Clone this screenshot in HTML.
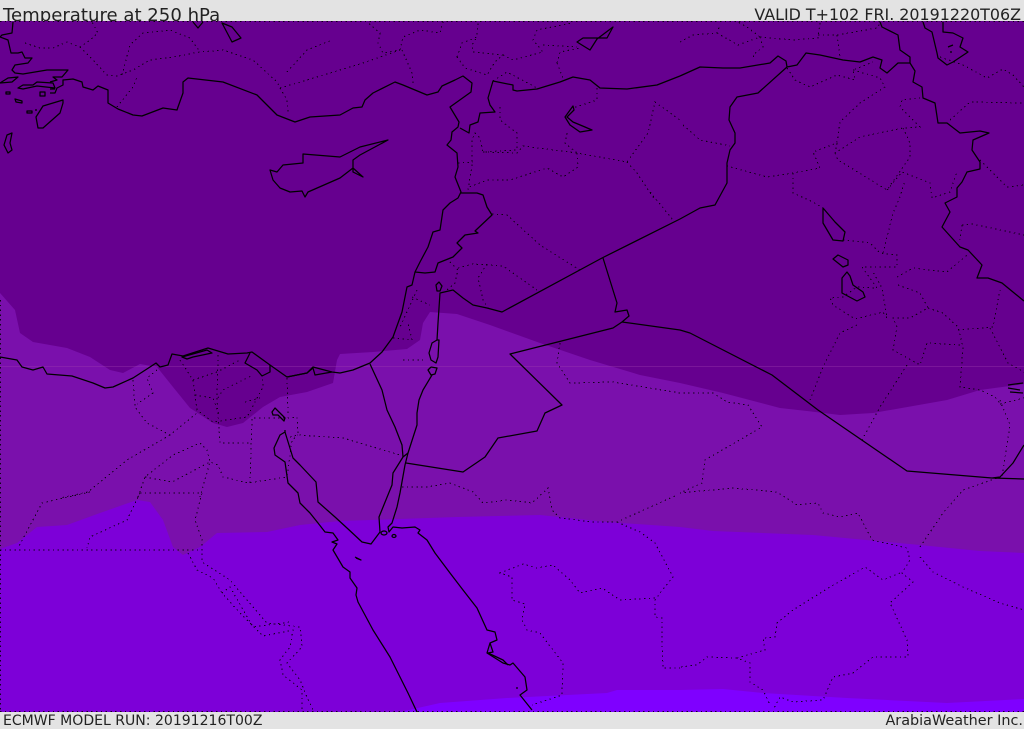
<!DOCTYPE html>
<html><head><meta charset="utf-8"><title>Temperature at 250 hPa</title>
<style>
html,body{margin:0;padding:0;background:#e3e3e3;width:1024px;height:729px;overflow:hidden}
.t{position:absolute;font-family:"DejaVu Sans","Liberation Sans",sans-serif;color:#222;white-space:nowrap;line-height:1}
svg{position:absolute;left:0;top:21px}
.c{fill:none;stroke:#000;stroke-width:1.25;stroke-linejoin:round;stroke-linecap:butt}
.d{fill:none;stroke:#000;stroke-width:1;stroke-dasharray:1.4 3.4;opacity:.85;shape-rendering:crispEdges}
</style></head><body>
<div class="t" style="left:3px;top:7px;font-size:18.1px">Temperature at 250 hPa</div>
<div class="t" style="right:3px;top:7px;font-size:15.9px">VALID T+102 FRI. 20191220T06Z</div>
<div class="t" style="left:3px;top:714px;font-size:14.04px">ECMWF MODEL RUN: 20191216T00Z</div>
<div class="t" style="right:1px;top:714px;font-size:14.4px">ArabiaWeather Inc.</div>
<svg width="1024" height="691" viewBox="0 21 1024 691">
<rect x="0" y="21" width="1024" height="691" fill="#7f00ff"/>
<polygon fill="#7d00d8" points="0,21 1024,21 1024,699 947,703 847,698 763,693 723,689 680,690 617,690 607,693 507,698 440,703 400,712 0,712"/>
<polygon fill="#7a10ac" points="0,21 1024,21 1024,553 980,551 920,545 813,535 713,531 680,527 607,522 540,515 457,517 340,521 300,525 267,532 217,533 200,547 183,555 173,547 163,520 150,502 137,500 100,513 67,525 37,527 17,543 0,549"/>
<polygon fill="#66008f" points="0,21 1024,21 1024,384 980,390 947,400 873,413 840,415 807,411 780,408 723,393 680,383 640,375 590,360 540,343 490,325 457,314 430,312 423,323 420,340 407,349 373,352 340,354 337,360 333,383 307,392 280,397 263,407 243,423 227,427 213,423 190,408 173,387 157,367 140,364 123,373 110,370 90,357 67,348 33,342 20,333 15,310 0,293"/>
<line x1="0" y1="366.5" x2="1024" y2="366.5" stroke="#a040b0" stroke-opacity=".35"/>
<!-- frame dots -->
<path class="d" d="M0,21.5H1024M0,711.5H1024M.5,300V712"/>
<!-- dotted borders -->
<path class="d" d="M25,43L40,48 53,48 67,42 80,47 90,40 98,33 92,22M80,47L93,60 107,75 117,76 133,70 150,60 173,57 200,52 223,50 253,60 277,82 280,88 287,100 288,113M122,75L130,45 143,33 170,30 190,38 200,52M117,107L133,87 137,77M280,88L307,80 340,70 363,63 400,50 383,53 378,43 380,33 367,22M400,50L403,37 420,30 440,33 443,22M402,50L412,73 413,83M287,72L307,50 332,40M457,57L462,43 477,37 478,22M457,57L465,68 487,75 495,62 503,55 473,52 472,45 477,37M503,55L513,60 543,52 533,40 537,30 572,23M543,45L577,47M557,63L563,78M557,63L560,52 580,48M493,81L507,72 537,88M597,88V100L573,108M500,107V120L517,133V150L483,152 480,138 475,133 472,140V167L470,177 468,190M483,152L517,153 523,146 577,153 627,162 648,133 655,102 680,120M627,162L637,173 655,200M577,153L578,167 563,177 547,168 510,180 487,180 467,188M458,163L473,162M567,133L565,143 577,153"/>
<path class="d" d="M680,42L693,35 717,33 720,25M717,33L738,45 760,37 747,27 738,22M760,37L793,40 818,38 820,23M818,35L837,35 877,28 881,22M760,37L763,47 753,55 755,60M837,35L840,57M787,68L795,80 810,87 837,75 855,80 853,70 873,62M853,70L880,78 885,87 860,103 840,122 837,143 813,152 820,168 793,173 767,177 727,166M683,125L700,140 730,146M837,143L835,153 860,137 903,128 920,127 900,107 902,100 920,98M903,128L910,143V157L887,190 838,160 835,153M887,190L902,172 930,183 932,198 950,192 957,172M950,120L970,102 1024,103M980,160L1007,187 1024,185M940,57L963,65 987,78 1003,69 1013,75 1024,87M793,173V193L813,202 823,208"/>
<path class="d" d="M843,240L870,243 880,253 897,255V267H862L877,288 857,287 843,297 830,298 833,305 855,319 883,312 887,318 882,288 872,270M883,253L893,213 900,197 905,180M897,277L913,268 947,272 967,255M898,285L920,293 928,308 910,318H893L897,327 893,350 920,365 927,343 962,345M928,308L943,313 958,327 963,347 960,387 980,390 995,397 1003,407M958,330L993,327 1000,290M990,328L1008,363 1024,372M907,365L880,407 862,440M857,325L840,333 823,367 810,400M962,225L972,224 1024,235M962,225L960,240M1000,400L1010,425 1002,477M1000,404L1024,398"/>
<path class="d" d="M560,343L557,363 570,383 613,382 680,393 713,393 727,402 748,405 762,427 705,460 702,483 680,493 733,488 777,492 797,505 818,503 823,513 840,517 858,513 872,540 907,548 910,560 902,573 913,582 890,603 907,640 908,657H873L853,673 833,677 823,700 793,702 780,697 773,710M920,547L943,513 963,490 1000,477M920,557L933,572 963,587 1000,603 1024,610M900,573L883,580 865,567 830,587 793,610 777,623 775,637 763,638 765,650 737,658 750,663V682L763,690 770,705M737,658L707,657 697,665 680,667"/>
<path class="d" d="M290,437L298,435 343,438 400,455M402,487H427L450,483 473,492 483,503 507,500 532,503 548,488 552,510 560,518 593,522H617L677,495M617,522L640,532 655,543 673,577 660,593 655,600V617L662,618V640L663,668H680M655,598L620,600 602,588 580,593 570,580 553,565 537,568 523,564 500,573 512,577V600L525,604 522,620 527,630 540,633 553,650 563,663 562,695 532,705"/>
<path class="d" d="M133,380L135,407 147,423 170,435 197,413M157,370L147,378 153,393 137,404M170,435L127,460 88,492 60,498M90,492L42,503 18,548M0,550H202M140,493H202L195,520 202,540V562L230,580 247,600 267,623 300,627 302,647 287,663 300,680 307,697 313,710M188,553L197,570 213,578 222,593 240,613 263,636 293,630 290,647 280,660 283,675 302,690V710M222,593L230,587 253,627 290,622M140,493L127,520 90,537 87,548M138,497L145,477 173,455 200,443 207,450 210,462 200,497M145,477L172,482 210,462 218,465 223,477 248,483 287,477 292,440 298,435M250,483L252,418H287L297,417 298,435M288,413L287,378M218,355L217,400 220,443H252M180,360L193,380 197,410 213,422 247,417 263,387 262,375M193,380L217,372 240,360M195,395L213,398 220,417M218,398L223,390 253,375M245,402L260,398"/>
<path class="d" d="M412,297L430,305M417,290L400,327M403,360H423M393,338L412,340 408,323M450,262L458,270 455,283 447,290M458,268L473,264 503,266 537,290M487,264L478,278 483,300 488,308M492,214L507,215 540,245 580,270M650,192L673,220"/>
<!-- Turkey coast -->
<path class="c" d="M13,22L12,33 2,35 0,37M0,37L8,40 11,53 18,53 22,52 25,58 32,58 28,63 15,65 12,70 15,73 23,74 47,70 68,70 62,77 53,77 57,80 50,82M50,93H55L57,88 63,85V80L73,79 82,82 83,87 93,90 98,86 108,90V103L118,109 133,115 142,116 163,108 177,110 178,107 183,93 183,82 188,78 223,82 257,95 267,105 277,115 295,122 310,117 340,115 353,108 362,107 365,100 373,93 395,82 403,85 427,95 438,92 442,86 455,80 463,76 472,83 471,92 450,107 459,122 458,127 452,132 451,140 447,145 457,153 458,167 455,177 461,192 458,198 450,203 443,210 440,230 433,232 428,247 420,262 415,272 412,285 407,287 402,312 393,337 382,352 370,363 353,370 340,373 332,372 313,367 307,373 287,377 270,365 252,352 247,353 228,354 208,348 183,356 172,354 168,365 160,367 156,363 150,367 133,378 113,387 105,388 93,383 72,376 47,374 43,367 33,370 22,367 17,360 0,357"/>
<path class="c" d="M680,76L657,85 627,89 600,88 590,80 573,77 560,82 537,89 517,91 513,90 513,85 493,81 488,98 490,105 495,112 480,113 478,122 470,125 469,133 460,128"/>
<path class="c" d="M680,76L700,67 723,68 740,68 770,63 778,56 786,61 787,67 797,65 806,53 820,55 843,60 860,62 873,57 882,60 880,68 887,73 898,63 910,63 915,71 913,82 922,87 923,98 935,103 938,123 947,123 960,133 980,131 989,133 973,140 972,150 980,162 980,169 967,172 962,182 957,188 957,197 945,203 950,212 942,227 960,247 968,250 982,265 977,278 988,278 1002,283 1024,301"/>
<path class="c" d="M880,22L882,27 898,35 900,50 910,57V63M923,22L925,28 932,32 937,53 938,58 947,65 953,62 968,52 960,47 963,38 953,33 943,32V22"/>
<!-- Syria/Iraq/Jordan/Saudi -->
<path class="c" d="M787,67L758,93 737,97 730,107 729,120 735,133V143L730,150 727,163V183L715,205 700,208 680,219 602,258 502,312 487,308 473,305 463,298 453,290 440,293 438,323 437,340"/>
<path class="c" d="M415,272L425,273 435,272 438,263 453,257 462,248 457,243 465,235 478,233 475,231 492,215 487,207 483,195 477,193 460,193"/>
<path class="c" d="M603,258L617,303 615,312 627,310 629,316 622,322 613,328 510,354 562,405 545,413 537,431 498,438 485,457 463,472 406,463"/>
<path class="c" d="M622,322L680,330 690,333 772,375 818,410 907,471 992,478 1024,479M1024,445L1013,463 1000,477 992,478"/>
<path class="c" d="M370,364L382,390 387,410 395,427 402,445 403,457"/>
<path class="c" d="M437,340L432,343 429,353 431,360 436,363 438,357 439,340 437,340M431,367L428,370 431,375 435,374 437,368 431,367M432,375L423,390 419,400 417,413V425L408,453"/>
<path class="c" d="M439,282L436,285 437,291 440,291 442,286Z"/>
<!-- Gulfs and Red Sea -->
<path class="c" d="M285,430V432L280,435 274,448 275,455 285,462 288,483 298,493 300,503 310,513 318,523 325,532 333,533 338,540 332,542 337,544 333,550 343,567 350,572V578L357,588 356,595 358,602 373,630 390,657 408,693 417,712"/>
<path class="c" d="M285,432L293,458 300,465 316,482 318,502 335,517 347,528 362,542 371,544 380,532 379,517 392,485 393,473 403,457 408,453 405,465 400,493 397,507 392,523 388,527 389,532 393,527 402,528 415,527 420,530 418,533 427,540 435,553 450,573 463,590 477,608 487,630 495,632 497,640 490,643 487,653 503,663 510,665 513,663 525,677 527,690 520,695 532,710"/>
<path class="c" d="M490,643L493,652 488,653 503,660 508,665M355,557L361,560 356,558"/>
<ellipse class="c" cx="384" cy="533" rx="3" ry="2"/><ellipse class="c" cx="394" cy="536" rx="2" ry="1.5"/>
<path class="c" d="M516,688H518"/>
<path class="c" d="M272,412L275,408 280,413 285,418 284,421 278,415 273,415Z"/>
<!-- Cyprus -->
<path class="c" d="M270,170L273,180 280,188 290,192 302,191 305,197 308,192 340,178 353,168 363,177 353,172 353,160 360,155 388,140 360,147 340,157 303,154V163L283,165 277,172Z"/>
<!-- Greek islands -->
<path class="c" d="M63,100L43,106 36,117 38,128H43L60,113 63,103Z"/>
<path class="c" d="M12,133L7,135 4,145 8,153 12,150 10,143Z"/>
<path class="c" d="M0,83L8,78 18,77 12,82ZM18,88L23,85H33L37,82 53,83 55,88 37,86 23,89ZM6,92H10V94H6ZM40,92H45V96H40ZM15,99L22,101V103L16,102ZM27,111H32V113H27ZM36,109V111M50,89H55"/>
<!-- lakes -->
<path class="c" d="M222,23L232,42 241,38 232,27ZM193,22L198,28 203,22"/>
<path class="c" d="M573,106L565,117 570,125 580,132 592,130 585,127 573,122 567,117 574,110Z"/>
<path class="c" d="M577,42L590,50 597,39 613,27 607,38 583,38Z"/>
<path class="c" d="M823,208L823,223 833,240 843,241 845,232 835,222Z"/>
<path class="c" d="M833,259L838,255 848,260V265L843,267Z"/>
<path class="c" d="M847,272L842,278V293L857,301 865,297 863,292 853,285 850,276Z"/>
<path class="c" d="M948,47L953,45M950,52H952"/>
<path class="c" d="M1008,385L1023,383M1010,392L1023,393M1008,388L1020,390"/>
<!-- delta lagoons -->
<path class="c" d="M182,357L207,350 212,353 193,357 187,359ZM250,353L245,363 257,370 262,376 270,372V365M287,377L307,373 313,368 315,375 332,372"/>
</svg>
</body></html>
